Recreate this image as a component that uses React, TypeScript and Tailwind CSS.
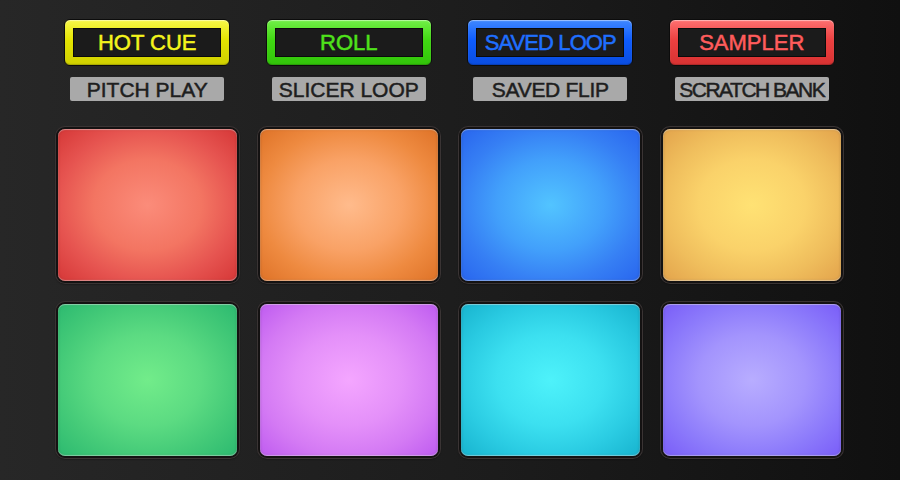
const modes = [
  {
    name: "HOT CUE",
    sub: "PITCH PLAY",
    frame: "bg-[linear-gradient(to_bottom,#f8f84a,#e4e400_45%,#d0d000)]",
    text: "text-[#f4f41c] tracking-normal",
    subText: "tracking-normal",
  },
  {
    name: "ROLL",
    sub: "SLICER LOOP",
    frame: "bg-[linear-gradient(to_bottom,#72f048,#40d812_45%,#32c40a)]",
    text: "text-[#4fe21a] tracking-normal",
    subText: "tracking-normal",
  },
  {
    name: "SAVED LOOP",
    sub: "SAVED FLIP",
    frame: "bg-[linear-gradient(to_bottom,#4088ff,#0e5cff_45%,#0a4de0)]",
    text: "text-[#1f6fff] tracking-[-0.9px]",
    subText: "tracking-[-0.3px]",
  },
  {
    name: "SAMPLER",
    sub: "SCRATCH BANK",
    frame: "bg-[linear-gradient(to_bottom,#ff7070,#ec4040_45%,#d83232)]",
    text: "text-[#ff5c5c] tracking-normal",
    subText: "tracking-[-1.5px]",
  },
];

// パッドの色 (中心 → 端 → 角)
const pads = [
  "bg-[radial-gradient(ellipse_closest-side,#fb8c7a_0%,#f37562_60%,#e65450_100%,#d63838_140%)]",
  "bg-[radial-gradient(ellipse_closest-side,#ffbb8c_0%,#f9a266_60%,#ee8a40_100%,#df7328_140%)]",
  "bg-[radial-gradient(ellipse_closest-side,#52c4ff_0%,#42a0fb_60%,#367ff4_100%,#2966ee_140%)]",
  "bg-[radial-gradient(ellipse_closest-side,#ffe274_0%,#fad26a_60%,#efbd5c_100%,#e3a44c_140%)]",
  "bg-[radial-gradient(ellipse_closest-side,#72ec8a_0%,#5cdb82_60%,#44ca78_100%,#2dba70_140%)]",
  "bg-[radial-gradient(ellipse_closest-side,#f4a6ff_0%,#e490f9_60%,#d47af4_100%,#bf5cf0_140%)]",
  "bg-[radial-gradient(ellipse_closest-side,#4ef2fa_0%,#3ce0f0_60%,#2acbe2_100%,#18b4cf_140%)]",
  "bg-[radial-gradient(ellipse_closest-side,#b8adff_0%,#a394fd_60%,#8c7afb_100%,#7a5ef8_140%)]",
];

const Pad = ({ color }: { color: string }) => (
  <div className="h-[156px] rounded-[9px] bg-[#141212] p-[2px] shadow-[0_0_0_1px_#3a3434,0_1px_2px_rgba(0,0,0,0.8)]">
    <div
      className={`h-full w-full rounded-[7px] ${color} shadow-[inset_0_1px_1px_rgba(255,255,255,0.45),inset_0_-1px_1px_rgba(255,255,255,0.4),inset_0_0_3px_rgba(0,0,0,0.25)]`}
    />
  </div>
);

export default function App() {
  return (
    <div className="w-[900px] h-[480px] overflow-hidden bg-[linear-gradient(to_right,#272727,#1c1c1c_55%,#101010)] font-['Liberation_Sans',Arial,sans-serif] pt-[19px] pl-[56px] pr-[57px]">
      {/* モードボタン */}
      <div className="grid grid-cols-4 gap-x-[19px]">
        {modes.map((m) => (
          <div key={m.name} className="flex flex-col items-center">
            <div
              className={`w-[166px] h-[47px] rounded-[6px] border border-[#0c0c0c] ${m.frame} px-[8px] py-[8px] shadow-[inset_0_1px_1px_rgba(255,255,255,0.5),inset_0_-1px_1px_rgba(0,0,0,0.2)]`}
            >
              <div className="h-full w-full bg-[#1b1b1b] border border-[#0a0a0a] flex items-center justify-center">
                <span className={`text-[22px] leading-none [-webkit-text-stroke:0.5px_currentColor] ${m.text}`}>
                  {m.name}
                </span>
              </div>
            </div>
            <div className="mt-[11px] w-[154px] h-[24px] bg-[#a9a9a9] rounded-[2px] flex items-center justify-center">
              <span
                className={`text-[21px] leading-none text-[#1e1e1e] [-webkit-text-stroke:0.5px_#1e1e1e] ${m.subText}`}
              >
                {m.sub}
              </span>
            </div>
          </div>
        ))}
      </div>

      {/* パッド */}
      <div className="mt-[26px] grid grid-cols-4 gap-x-[19px] gap-y-[19px]">
        {pads.map((p, i) => (
          <Pad key={i} color={p} />
        ))}
      </div>
    </div>
  );
}
